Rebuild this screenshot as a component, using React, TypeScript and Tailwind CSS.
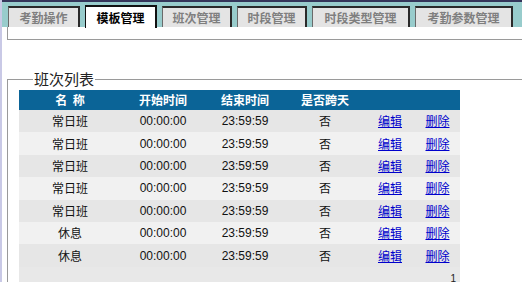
import React from "react";

const tabs = [
  { label: "考勤操作", w: "w-[72px]" },
  { label: "模板管理", w: "w-[72px]", active: true },
  { label: "班次管理", w: "w-[70px]" },
  { label: "时段管理", w: "w-[70px]" },
  { label: "时段类型管理", w: "w-[98px]" },
  { label: "考勤参数管理", w: "w-[98px]" },
];

const rows = [
  { name: "常日班", start: "00:00:00", end: "23:59:59", cross: "否" },
  { name: "常日班", start: "00:00:00", end: "23:59:59", cross: "否" },
  { name: "常日班", start: "00:00:00", end: "23:59:59", cross: "否" },
  { name: "常日班", start: "00:00:00", end: "23:59:59", cross: "否" },
  { name: "常日班", start: "00:00:00", end: "23:59:59", cross: "否" },
  { name: "休息", start: "00:00:00", end: "23:59:59", cross: "否" },
  { name: "休息", start: "00:00:00", end: "23:59:59", cross: "否" },
];

const cjk = "font-['Noto_Sans_CJK_SC',sans-serif]";
const num = "font-['Liberation_Sans','Noto_Sans_CJK_SC',sans-serif]";

export default function App() {
  return (
    <div className="w-[522px] h-[282px] overflow-hidden bg-white border-l-2 border-[#c9c9e6] text-[12px]">
      {/* tab strip */}
      <div className="h-[27px] bg-[#98cccc] border-t-2 border-[#35355a] flex items-end pl-[6px] gap-[5px]">
        {tabs.map((t) => (
          <div
            key={t.label}
            className={`${t.w} flex items-center justify-center font-bold ${cjk} leading-none border-t-2 border-l border-r-2 ${
              t.active
                ? "h-[23px] bg-white text-black border-[#111] mb-[-1px]"
                : "h-[21px] bg-[#e4e4e4] text-[#7f7f7f] border-[#2a2a2a] border-l-[#6a6a6a]"
            }`}
          >
            {t.label}
          </div>
        ))}
      </div>

      <div className="ml-[5px] h-[13px] border-l border-b border-[#9a9a9a]" />

      <fieldset className="mt-[31px] ml-[5px] border-t border-l border-[#9a9a9a] pl-[11px] pt-[3px]">
        <legend className={`ml-[14px] px-[1px] text-[15px] leading-[16px] text-[#222] ${cjk}`}>班次列表</legend>
        <div className="w-[441px]">
          <div className={`h-[20px] bg-[#0b6497] text-white font-bold flex items-center ${cjk}`}>
            <div className="w-[102px] text-center">名&nbsp;&nbsp;称</div>
            <div className="w-[84px] text-center">开始时间</div>
            <div className="w-[80px] text-center">结束时间</div>
            <div className="w-[80px] text-center">是否跨天</div>
            <div className="w-[50px]" />
            <div className="w-[45px]" />
          </div>
          {rows.map((r, i) => (
            <div
              key={i}
              className={`h-[22.4px] flex items-center text-[#111] ${i % 2 === 0 ? "bg-[#e6e6e6]" : "bg-[#f1f1f1]"}`}
            >
              <div className={`w-[102px] text-center ${cjk}`}>{r.name}</div>
              <div className={`w-[84px] text-center ${num}`}>{r.start}</div>
              <div className={`w-[80px] text-center ${num}`}>{r.end}</div>
              <div className={`w-[80px] text-center ${cjk}`}>{r.cross}</div>
              <div className={`w-[50px] text-center ${cjk}`}>
                <a href="#" className="text-[#0000cc] underline">编辑</a>
              </div>
              <div className={`w-[45px] text-center ${cjk}`}>
                <a href="#" className="text-[#0000cc] underline">删除</a>
              </div>
            </div>
          ))}
          <div className="h-[20px] bg-[#e8e8e8] flex justify-end pr-[4px] pt-[7px]">
            <span className={`text-[10px] leading-none text-[#222] ${num}`}>1</span>
          </div>
        </div>
      </fieldset>
    </div>
  );
}
